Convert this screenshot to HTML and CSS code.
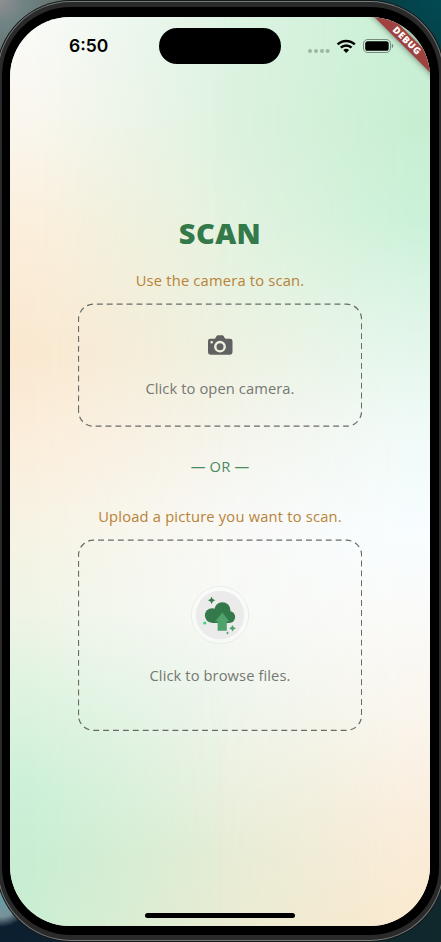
FILE: index.html
```html
<!DOCTYPE html>
<html lang="en">
<head>
<meta charset="utf-8">
<title>Scan</title>
<link rel="stylesheet" href="styles.css">
</head>
<body>
<div class="phone">
  <div class="bezel">
    <main class="screen">
      <header class="status">
        <span class="time">6:50</span>
        <span class="island"></span>
        <svg class="signals" width="88" height="20" viewBox="306 35 88 20">
          <g fill="#000" fill-opacity=".25"><circle cx="310" cy="50" r="2"/><circle cx="316" cy="50" r="2"/><circle cx="322" cy="50" r="2"/><circle cx="327.6" cy="50" r="2"/></g>
          <g fill="none" stroke="#000" stroke-width="2.5">
            <path d="M337.6 43.4a12.4 12.4 0 0 1 17.2 0"/>
            <path d="M340.8 46.7a7.8 7.8 0 0 1 10.8 0"/>
          </g>
          <path d="M346.2 52l-2.9-2.9a4.1 4.1 0 0 1 5.8 0z"/>
          <rect x="363.5" y="38.5" width="27" height="13" rx="4.2" fill="none" stroke="#000" stroke-opacity=".42"/>
          <rect x="365.2" y="40.2" width="23.5" height="9.6" rx="2.6"/>
          <path d="M391.8 42.8q1.500 .6 1.500 2.200t-1.500 2.200z" fill-opacity=".45"/>
        </svg>
      </header>

      <h1 class="title">SCAN</h1>
      <p class="hint">Use the camera to scan.</p>
      <button class="drop camera">
        <svg class="outline" width="284" height="124" viewBox="0 0 284 124"><path d="M.5 108.200V16.200a15 15 0 0 1 15-15H268.600a15 15 0 0 1 15 15V108.200a15 15 0 0 1-15 15H15.500a15 15 0 0 1-15-15"/></svg>
        <svg class="camera-icon" width="26" height="22" viewBox="207 334 26 22">
          <path fill="#616161" fill-rule="evenodd" d="M210 338.700h4.300q.8 0 1.200-.8l.9-1.600q.6-1 1.600-1h4.200q1 0 1.600 1l.9 1.600q.4.800 1.200.8h4.200q2.400 0 2.400 2.300v11.300q0 2.400-2.400 2.400H210.300q-2.300 0-2.300-2.400v-11.300q0-2.300 2-2.300zM220 340.800a5.900 5.900 0 1 0 0 11.800a5.900 5.900 0 1 0 0-11.800zM211.700 341a1.300 1.300 0 1 0 0 2.600a1.300 1.300 0 1 0 0-2.600z"/>
          <circle cx="220" cy="346.700" r="3.500" fill="#616161"/>
        </svg>
        <span>Click to open camera.</span>
      </button>
      <p class="or">— OR —</p>
      <p class="hint upload">Upload a picture you want to scan.</p>
      <button class="drop files">
        <svg class="outline" width="284" height="192" viewBox="0 0 284 192"><path d="M.5 176.300V16.200a15 15 0 0 1 15-15H268.600a15 15 0 0 1 15 15V176.300a15 15 0 0 1-15 15H15.500a15 15 0 0 1-15-15"/></svg>
        <svg class="files-icon" width="60" height="60" viewBox="190 585 60 60">
          <circle cx="220" cy="615" r="28.700" fill="#fff" fill-opacity=".3" stroke="#e9eeea"/>
          <circle cx="220" cy="615" r="24.300" fill="#ebebec"/>
          <g fill="#33794a">
            <circle cx="212.200" cy="615.500" r="7.300"/><circle cx="222.400" cy="610.200" r="8"/><circle cx="229.200" cy="617" r="6"/>
            <path d="M212 613h17v10h-17z"/>
            <path d="M211.600 596.700q.6 3 3.600 3.600q-3 .6-3.600 3.600q-.6-3-3.600-3.600q3-.6 3.600-3.600z"/>
          </g>
          <path fill="#4da36a" d="M222.300 612.400l7 8.900h-2.500v9.500h-9.200v-9.500h-2.400z"/>
          <path fill="#4da36a" d="M232.500 625q.6 2.700 3.300 3.300q-2.700.6-3.300 3.300q-.6-2.700-3.300-3.300q2.700-.6 3.300-3.300z"/>
          <path fill="#4da36a" d="M227.500 631.300q.3 1.400 1.700 1.700q-1.400.3-1.700 1.700q-.3-1.400-1.700-1.700q1.400-.3 1.700-1.700z"/>
          <circle cx="204.800" cy="623" r="1.600" fill="#38d873"/>
        </svg>
        <span>Click to browse files.</span>
      </button>
      <div class="home"></div>
      <div class="banner">DEBUG</div>
    </main>
  </div>
</div>
</body>
</html>
```
FILE: styles.css
```css
* { box-sizing: border-box; }

body {
  margin: 0;
  height: 942px;
  overflow: hidden;
  background:
    radial-gradient(circle at 0 0, #908e90 0, #6f8385 25px, transparent 60px),
    radial-gradient(circle at 0 895px, #65a0a8 0, #789198 22px, transparent 32px),
    radial-gradient(circle at 441px 0, #024a52 0, #04424a 40px, transparent 80px),
    linear-gradient(90deg, #66706c 0, #66706c 200px, #143034 400px) top / 100% 60% no-repeat,
    linear-gradient(90deg, #0c1f30, #10282c);
  font-family: "Open Sans", sans-serif;
}

.phone {
  width: 447px;
  height: 940px;
  margin: 1px 0 0 -3px;
  padding: 1px;
  border-radius: 74px;
  background: #74797a;
  box-shadow: 0 0 0 1px #151818;
}

.bezel {
  height: 938px;
  padding: 10px 8px 10px;
  border: 5px solid #2a2a2b;
  border-width: 5px 4px;
  border-radius: 73px;
  background: #000;
}

.screen {
  position: relative;
  display: flex;
  flex-direction: column;
  align-items: center;
  width: 420px;
  height: 909px;
  overflow: hidden;
  border-radius: 60px;
  background: linear-gradient(#dff4e4, #dff3e2 12%, #e6f3e1 24%, #eff2e2 37%, #f5f4ea 45%, #f9f9f6 55%, #f8faf7 65%, #eff6ed 74%, #ebf2e2 83%, #e6edd6 92%, #e9ecd3);
  isolation: isolate;
}

.screen::before,
.screen::after {
  content: "";
  position: absolute;
  inset: 0;
  z-index: -1;
}

.screen::before {
  background: linear-gradient(#f9faf8, #faf6ed 12%, #fbeeda 24%, #fae8d0 37%, #fbeedc 47%, #f6f3e4 57%, #eef4e6 66%, #ddf3e0 75%, #ccf0d8 85%, #c8edd2 93%, #cbeed3);
  mask-image: linear-gradient(90deg, #000 0, #000 5%, transparent 52%);
}

.screen::after {
  background: linear-gradient(#c9f0d6, #c8eed2 12%, #cbf1d9 22%, #dff5e7 33%, #f0faf7 45%, #f8fdff 57%, #faf9f6 68%, #faf5ed 77%, #faeddc 88%, #fae9cf);
  mask-image: linear-gradient(270deg, #000 0, #000 5%, transparent 52%);
}

.status {
  display: flex;
  align-items: center;
  width: 100%;
  height: 36px;
  margin-top: 11px;
  padding-left: 59px;
  color: #000;
}

.time {
  width: 90px;
  font: 600 17.500px/36px Inter, sans-serif;
}

.island {
  width: 122px;
  height: 36px;
  border-radius: 18px;
  background: #000;
}

.signals { margin-left: 25px; }

.title {
  margin: 149px 0 0;
  font-size: 29px;
  font-weight: 800;
  line-height: 40px;
  letter-spacing: .4px;
  color: #33794a;
}

.hint, .or {
  margin: 17px 0 0;
  font-size: 14.700px;
  line-height: 20px;
  letter-spacing: .2px;
  color: #b88237;
}

.or {
  margin-top: 29px;
  color: #4a8a5f;
}

.hint.upload { margin-top: 30px; }

.drop {
  position: relative;
  display: flex;
  flex-direction: column;
  align-items: center;
  width: 284px;
  margin: 13px 0 0;
  padding: 0;
  border: 0;
  background: none;
  color: #757774;
  font: 14.700px/20px "Open Sans", sans-serif;
  letter-spacing: .1px;
}

.camera {
  height: 124px;
  padding-top: 31px;
  gap: 22px;
}

.files {
  height: 192px;
  padding-top: 46px;
  gap: 20px;
}

.outline {
  position: absolute;
  inset: 0;
  fill: none;
  stroke: #696b69;
  stroke-width: 1.200;
  stroke-dasharray: 5.900 4;
}

.home {
  width: 150px;
  height: 5px;
  margin: auto 0 8px;
  border-radius: 3px;
  background: #000;
}

.banner {
  position: absolute;
  top: 17.500px;
  right: -37px;
  width: 120px;
  height: 11.700px;
  background: #a04340;
  box-shadow: 0 0 6px rgba(0, 0, 0, .5);
  color: #fff;
  font-size: 9.500px;
  font-weight: 800;
  line-height: 11.700px;
  letter-spacing: .6px;
  text-align: center;
  transform: rotate(45deg);
}
```
